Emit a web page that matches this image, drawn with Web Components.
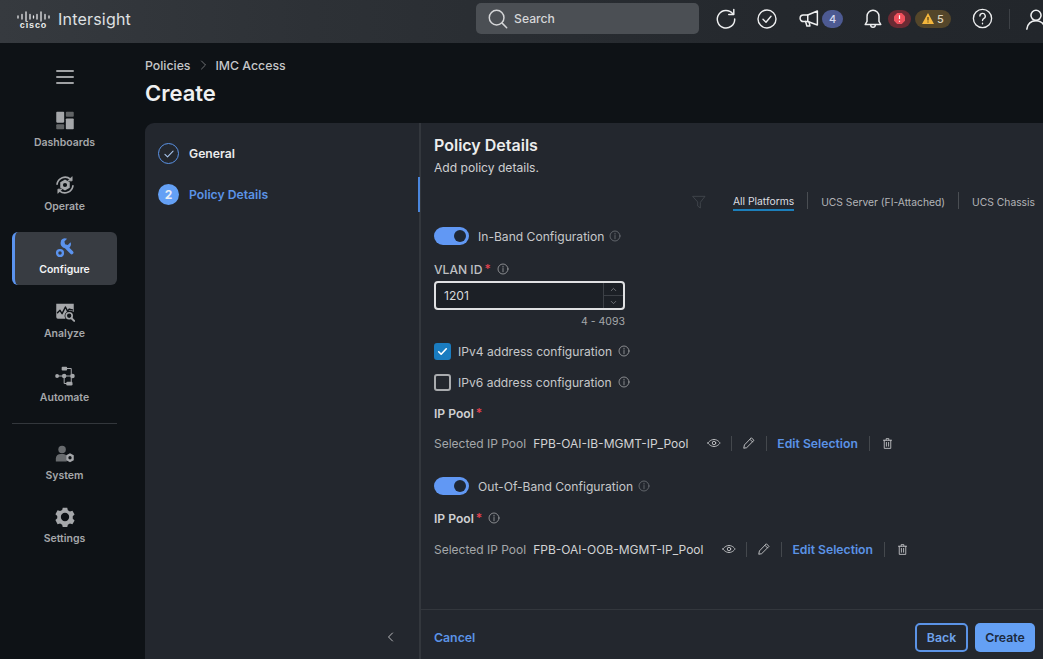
<!DOCTYPE html>
<html lang="en">
<head>
<meta charset="utf-8">
<title>Intersight - Create IMC Access policy</title>
<style>
    html, body {
        margin: 0;
        height: 100%;
        overflow: hidden;
        background: #0e1216;
        font-family: Inter, "Liberation Sans", sans-serif;
        color: #e6e7e9;
    }
</style>
</head>
<body>
<app-shell>
    <top-bar slot="top"></top-bar>
    <side-nav slot="nav">
        <nav-item icon="dashboards">Dashboards</nav-item>
        <nav-item icon="operate">Operate</nav-item>
        <nav-item icon="configure" active>Configure</nav-item>
        <nav-item icon="analyze">Analyze</nav-item>
        <nav-item icon="automate">Automate</nav-item>
        <nav-rule></nav-rule>
        <nav-item icon="system">System</nav-item>
        <nav-item icon="settings">Settings</nav-item>
    </side-nav>
    <page-head>
        <span slot="crumb">Policies</span>
        <span slot="current">IMC Access</span>
        Create
    </page-head>
    <wizard-card>
        <wizard-step slot="steps" state="done">General</wizard-step>
        <wizard-step slot="steps" state="current" number="2">Policy Details</wizard-step>

        <pane-title title="Policy Details" sub="Add policy details."></pane-title>
        <platform-tabs></platform-tabs>

        <toggle-row style="margin-top:16px">In-Band Configuration</toggle-row>
        <field-label info style="margin-top:16px">VLAN ID</field-label>
        <number-field value="1201" hint="4 - 4093"></number-field>
        <check-row checked style="margin-top:13px">IPv4 address configuration</check-row>
        <check-row style="margin-top:13px">IPv6 address configuration</check-row>
        <field-label bold style="margin-top:14px">IP Pool</field-label>
        <pool-row value="FPB-OAI-IB-MGMT-IP_Pool" style="margin-top:13px"></pool-row>

        <toggle-row style="margin-top:25px">Out-Of-Band Configuration</toggle-row>
        <field-label bold info style="margin-top:15px">IP Pool</field-label>
        <pool-row value="FPB-OAI-OOB-MGMT-IP_Pool" style="margin-top:14px"></pool-row>

        <wizard-footer slot="footer"></wizard-footer>
    </wizard-card>
</app-shell>

<script>
const ICONS = {
    search: `<circle cx="10.5" cy="10.5" r="8"/><path d="M16.500 16.500l5 5"/>`,
    refresh: `<path d="M19.500 6.500A9.500 9.500 0 1 0 21.500 12"/><path d="M20.500 1.500v5.500h-5.500"/>`,
    checkCircle: `<circle cx="12" cy="12" r="9"/><path d="M8 12.200l3 3 5-6"/>`,
    megaphone: `<path d="M21 3.500v16L10 15.500H5a3 3 0 0 1 0-7.500h5z"/><path d="M10 8v7.500M7.500 15.500l1.500 5h3.500l-1-4.300"/>`,
    bell: `<path d="M12 2.500a6.500 6.500 0 0 0-6.500 6.500v5.500L3.500 18h17l-2-3.500V9A6.500 6.500 0 0 0 12 2.500z"/><path d="M9.500 18.500a2.500 2.500 0 0 0 5 0"/>`,
    help: `<circle cx="12" cy="12" r="9.500"/><path d="M9.300 9.500a2.800 2.800 0 1 1 4.200 2.400c-1 .6-1.500 1.100-1.500 2.300"/><path d="M12 17v.5"/>`,
    user: `<circle cx="12" cy="8" r="5.500"/><path d="M2 23c1-6 5-9 10-9s9 3 10 9"/>`,
    menu: `<path d="M3 5.500h18M3 12h18M3 18.500h18"/>`,
    filter: `<path d="M3 3.500h18l-7 9V21l-4-3v-5.500z"/>`,
    eye: `<path d="M1.500 12S5.500 6 12 6s10.500 6 10.500 6-4 6-10.500 6S1.500 12 1.500 12z"/><circle cx="12" cy="12" r="3"/>`,
    pencil: `<path d="M16.500 3.500l4 4L8 20l-5 1 1-5z"/><path d="M14 6l4 4"/>`,
    trash: `<path d="M4.500 6h15M9.500 6V3h5v3M6 6v15h12V6M10 10v7M14 10v7"/>`,
    chevronLeft: `<path d="M15 4l-8 8 8 8"/>`,
    chevronRight: `<path d="M9 4l8 8-8 8"/>`,
    chevronUp: `<path d="M6 15l6-6 6 6"/>`,
    chevronDown: `<path d="M6 9l6 6 6-6"/>`,
    tick: `<path d="M5 12.500l4.500 4.500L19 7"/>`,
    info: `<circle cx="12" cy="12" r="10"/><path d="M12 11v6.500"/><path d="M12 6.500v1.800"/>`,
    dashboards: `<g fill="currentColor" stroke="none"><rect x="1.500" y="1" width="9.500" height="13" rx="1"/><rect x="13" y="1" width="9.500" height="6" rx="1" opacity=".55"/><rect x="1.500" y="16" width="9.500" height="6" rx="1" opacity=".55"/><rect x="13" y="9" width="9.500" height="13" rx="1"/></g>`,
    operate: `<path d="M2.500 11A9.700 9.700 0 0 1 18.500 5M21.500 13A9.700 9.700 0 0 1 5.500 19" stroke-width="2"/><path fill="currentColor" stroke="currentColor" stroke-width="1" d="M20.500 2.500v4.500H16zM3.500 21.500V17H8z"/><path fill="currentColor" stroke="none" fill-rule="evenodd" d="M12 5.500l5.700 3.200v6.600L12 18.500l-5.700-3.200V8.700zM12 9.500a2.500 2.500 0 1 0 0 5 2.500 2.500 0 0 0 0-5z"/>`,
    configure: `<path fill="currentColor" stroke="none" d="M8.500 2.500A6 6 0 0 1 15.500 1l-3.200 3.200.8 3.300 3.300.8L19.600 5a6 6 0 0 1-1.300 6.700l4.200 4.300a2 2 0 0 1-3 3l-6.600-6.700a6 6 0 0 1-5-7.500z" transform="translate(-1 0)"/><circle cx="6" cy="18" r="3.500" stroke-width="2.800"/>`,
    analyze: `<path fill="currentColor" stroke="none" d="M1.500 2h21v10a6.500 6.500 0 0 0-10 8H3.500a2 2 0 0 1-2-2z"/><path d="M3 13l3-3 2.500 4 4-8 2.500 5 2-2.500 4 1" stroke="#0e1216" stroke-width="1.700"/><circle cx="17" cy="16.500" r="3.600" stroke-width="2"/><path d="M19.800 19.500l3.200 3.200" stroke-width="2.400"/>`,
    automate: `<g fill="currentColor" stroke="none"><circle cx="2.500" cy="12" r="2.300"/><circle cx="11" cy="12" r="2.700"/><rect x="8" y="1" width="6.500" height="4.500" rx="1"/><circle cx="21" cy="12" r="2.700"/><rect x="13.500" y="19" width="7.500" height="4.500" rx="1.500"/></g><path d="M2 12h19M11 3h8.500v17M11 12v9h4" stroke-width="1.200"/>`,
    system: `<g fill="currentColor" stroke="none"><circle cx="8.500" cy="6.500" r="4.500" opacity=".6"/><path d="M1 21v-4a6 6 0 0 1 6-5h3a6 6 0 0 1 4 2v7z" opacity=".6"/><path fill-rule="evenodd" d="M18 11l4.500 2.600v5.800L18 22l-4.500-2.600v-5.800zM18 14.500a2 2 0 1 0 0 4 2 2 0 0 0 0-4z"/></g>`,
    settings: `<path fill="currentColor" stroke="none" fill-rule="evenodd" d="M9.300 1h5.400l.7 3 2.500 1.400 3-.9 2.600 4.600-2.200 2.100v2.800l2.200 2.100-2.600 4.600-3-.9-2.500 1.400-.7 3H9.300l-.7-3-2.500-1.400-3 .9L.5 15.600l2.200-2.100v-2.800L.5 8.600l2.600-4.600 3 .9 2.500-1.400zM12 7a5 5 0 1 0 0 10 5 5 0 0 0 0-10z"/>`
};

function tpl(html) {
    const template = document.createElement("template");
    template.innerHTML = html;
    return template;
}

/**
 * Base for every element on the page: opens the shadow root and clones the
 * template of the subclass into it.
 */
class UiElement extends HTMLElement {
    constructor() {
        super();
        this.attachShadow({mode: "open"});
        this.shadowRoot.appendChild(this.constructor.template.content.cloneNode(true));
    }
    attr(name, fallback = "") {
        return this.hasAttribute(name) ? this.getAttribute(name) : fallback;
    }
}

class UiIcon extends HTMLElement {
    constructor() {
        super();
        this.attachShadow({mode: "open"});
    }
    connectedCallback() {
        const size = this.getAttribute("size") || 16;
        const stroke = this.getAttribute("stroke") || 1.8;
        this.shadowRoot.innerHTML = `
            <style>:host { display: inline-flex; flex: none; } svg { display: block; }</style>
            <svg width="${size}" height="${size}" viewBox="0 0 24 24" fill="none" stroke="currentColor"
                stroke-width="${stroke}" stroke-linecap="round" stroke-linejoin="round">${ICONS[this.getAttribute("name")]}</svg>`;
    }
}
customElements.define("ui-icon", UiIcon);

class AppShell extends UiElement {
    static template = tpl(`
        <style>
            :host { display: grid; grid-template: 43px 1fr / 129px 1fr; height: 659px; width: 1043px; overflow: hidden; }
            .top { grid-column: 1 / 3; }
            main { display: flex; flex-direction: column; padding-left: 16px; min-width: 0; min-height: 0; }
        </style>
        <div class="top"><slot name="top"></slot></div>
        <slot name="nav"></slot>
        <main><slot></slot></main>
    `);
}
customElements.define("app-shell", AppShell);

class TopBar extends UiElement {
    static template = tpl(`
        <style>
            :host { display: flex; align-items: center; height: 43px; box-sizing: border-box; padding: 0 0 6px 17px; color: #eeeff0;
                background: linear-gradient(90deg, #363a3f 0%, #2d3136 30%, #24282d 75%, #22262b 100%); overflow: hidden; }
            .logo { display: flex; flex-direction: column; align-items: center; width: 33px; margin-top: 2px; }
            .logo span { font: 700 9px/8px "Liberation Sans", sans-serif; letter-spacing: .9px; margin-top: -1px; color: #eceded; }
            .name { font-size: 16px; margin-left: 8px; color: #dfe0e2; letter-spacing: .2px; white-space: nowrap; }
            .search { display: flex; align-items: center; gap: 5px; width: 212px; height: 31px; flex: none; margin-left: 345px; padding-left: 11px;
                background: #4b4f54; border-radius: 5px; font-size: 12.200px; font-weight: 500; color: #d5d6d8; }
            .badge { display: inline-flex; align-items: center; justify-content: center; flex: none; gap: 3px; height: 18px; border-radius: 9px; font-size: 11px; font-weight: 500; }
            .bar { width: 1px; height: 20px; flex: none; background: #3d4146; margin-left: 15.500px; }
        </style>
        <div class="logo">
            <svg width="33" height="11" viewBox="0 0 33 11" stroke="#e6e7e9" stroke-width="1.300" stroke-linecap="round">
                <path d="M1 5v2M5 3.500v4.500M9 1v9M13 3.500v4.500M16.500 5v2M20 3.500v4.500M24 1v9M28 3.500v4.500M32 5v2"/>
            </svg>
            <span>cisco</span>
        </div>
        <div class="name">Intersight</div>
        <div class="search"><ui-icon name="search" size="22" stroke="1.600"></ui-icon>Search</div>
        <ui-icon name="refresh" size="22" stroke="1.600" style="margin-left:16px"></ui-icon>
        <ui-icon name="checkCircle" size="24" stroke="1.400" style="margin-left:18px"></ui-icon>
        <ui-icon name="megaphone" size="21" stroke="1.700" style="margin-left:19.500px"></ui-icon>
        <span class="badge" style="width:21px;margin-left:2.500px;background:#4d5a92;color:#d7dbef">4</span>
        <ui-icon name="bell" size="22" stroke="1.600" style="margin-left:19px"></ui-icon>
        <span class="badge" style="width:23px;margin-left:4px;background:#6b2a33">
            <svg width="11" height="11" viewBox="0 0 12 12"><path fill="#f0505c" d="M3.500 0h5L12 3.500v5L8.500 12h-5L0 8.500v-5z"/><path d="M6 2.500v4M6 8.500v1" stroke="#fff" stroke-width="1.300"/></svg>
        </span>
        <span class="badge" style="width:36px;margin-left:4px;background:#54462a;color:#ddd6c2">
            <svg width="12" height="11" viewBox="0 0 12 11"><path fill="#f4b63c" d="M6 0l6 11H0z"/><path d="M6 4v3.500M6 8.500v1" stroke="#3a2f15" stroke-width="1.100"/></svg>5
        </span>
        <ui-icon name="help" size="23" stroke="1.400" style="margin-left:19.500px"></ui-icon>
        <span class="bar"></span>
        <ui-icon name="user" size="22" stroke="1.700" style="margin-left:15px"></ui-icon>
    `);
}
customElements.define("top-bar", TopBar);

class SideNav extends UiElement {
    static template = tpl(`
        <style>
            :host { display: flex; flex-direction: column; padding: 0 12px; gap: 10.700px; color: #a5a7aa; }
            .menu { display: flex; justify-content: center; height: 16px; margin: 23px 0 12.300px; color: #d0d1d3; }
        </style>
        <div class="menu"><ui-icon name="menu" size="22" stroke="1.500"></ui-icon></div>
        <slot></slot>
    `);
}
customElements.define("side-nav", SideNav);

class NavItem extends UiElement {
    static template = tpl(`
        <style>
            :host { display: block; height: 53px; box-sizing: border-box; border-radius: 6px; }
            :host([active]) { background: #383c42; border-left: 3px solid #5b93ee; color: #f2f3f4; }
            :host([active]) .wrap { margin-left: -3px; }
            :host([active]) ui-icon { color: #5b93ee; }
            .wrap { display: flex; flex-direction: column; align-items: center; padding-top: 6px; }
            #i { display: flex; }
            .label { font-size: 10.500px; font-weight: 600; line-height: 14px; margin-top: 5px; }
        </style>
        <div class="wrap"><span id="i"></span><div class="label"><slot></slot></div></div>
    `);
    connectedCallback() {
        this.shadowRoot.getElementById("i").innerHTML =
            `<ui-icon name="${this.attr("icon")}" size="20" stroke="1.600"></ui-icon>`;
    }
}
customElements.define("nav-item", NavItem);

class NavRule extends UiElement {
    static template = tpl(`
        <style>:host { display: block; height: 1px; background: #33373c; margin: 0 0 2.500px; }</style>
    `);
}
customElements.define("nav-rule", NavRule);

class PageHead extends UiElement {
    static template = tpl(`
        <style>
            :host { display: block; height: 80px; flex: none; }
            .crumbs { display: flex; align-items: center; height: 16px; margin-top: 14px; font-size: 12.300px; font-weight: 500; color: #c5c6c8; }
            .crumbs ui-icon { margin: 0 6px 0 7px; color: #8d8f92; }
            h1 { margin: 6px 0 0; font-size: 22px; line-height: 28px; font-weight: 600; color: #eff0f1; }
        </style>
        <div class="crumbs"><slot name="crumb"></slot><ui-icon name="chevronRight" size="12" stroke="1.500"></ui-icon><slot name="current"></slot></div>
        <h1><slot></slot></h1>
    `);
}
customElements.define("page-head", PageHead);

class WizardCard extends UiElement {
    static template = tpl(`
        <style>
            :host { display: grid; grid-template-columns: 276px 1fr; flex: 1; min-height: 0; background: #23272e; border-radius: 9px 0 0 0; }
            .steps { display: flex; flex-direction: column; gap: 20px; padding-top: 20px; border-right: 2px solid #33373d; position: relative; }
            .mark { position: absolute; right: -1px; top: 54px; width: 2px; height: 35px; background: #4a86dd; }
            .collapse { position: absolute; left: 240px; bottom: 16px; color: #c9cacc; }
            .right { display: flex; flex-direction: column; min-width: 0; }
            .body { flex: 1; padding: 12px 0 0 13px; display: flex; flex-direction: column; align-items: flex-start; }
        </style>
        <div class="steps">
            <slot name="steps"></slot>
            <div class="mark"></div>
            <ui-icon class="collapse" name="chevronLeft" size="12" stroke="1.800"></ui-icon>
        </div>
        <div class="right">
            <div class="body"><slot></slot></div>
            <slot name="footer"></slot>
        </div>
    `);
}
customElements.define("wizard-card", WizardCard);

class WizardStep extends UiElement {
    static template = tpl(`
        <style>
            :host { display: flex; align-items: center; gap: 10px; height: 21px; padding-left: 13px; font-size: 12.200px; font-weight: 600; color: #eceded; }
            :host([state=current]) { color: #5b93e6; }
            .dot { display: flex; align-items: center; justify-content: center; width: 21px; height: 21px; box-sizing: border-box; border-radius: 50%; font-size: 12px; font-weight: 700; }
            .done { border: 1.500px solid #5b93e6; color: #a9c6ee; }
            .now { background: #64a0f5; color: #e9eef6; }
        </style>
        <div class="dot" id="d"></div><slot></slot>
    `);
    connectedCallback() {
        const dot = this.shadowRoot.getElementById("d");
        if(this.attr("state") === "done") {
            dot.classList.add("done");
            dot.innerHTML = `<ui-icon name="tick" size="14" stroke="1.800"></ui-icon>`;
        } else {
            dot.classList.add("now");
            dot.textContent = this.attr("number");
        }
    }
}
customElements.define("wizard-step", WizardStep);

class PaneTitle extends UiElement {
    static template = tpl(`
        <style>
            :host { display: block; }
            h2 { margin: 0; font-size: 16px; line-height: 20px; font-weight: 600; color: #eceded; }
            p { margin: 5px 0 0; font-size: 12.100px; line-height: 16px; color: #cfd0d2; }
        </style>
        <h2 id="t"></h2><p id="s"></p>
    `);
    connectedCallback() {
        this.shadowRoot.getElementById("t").textContent = this.attr("title");
        this.shadowRoot.getElementById("s").textContent = this.attr("sub");
    }
}
customElements.define("pane-title", PaneTitle);

class PlatformTabs extends UiElement {
    static template = tpl(`
        <style>
            :host { display: flex; align-items: stretch; height: 19px; margin-top: 16px; align-self: stretch; font-size: 10.300px; color: #b3b5b8; }
            .filter { margin: 0 26px 0 257px; color: #454a50; align-self: center; }
            .tab { display: flex; align-items: center; box-sizing: border-box; white-space: nowrap; }
            .on { color: #dcdde0; border-bottom: 2px solid #1c7fbb; }
            .sep { width: 1px; background: #4a4e53; margin: 0 13px; height: 17px; }
        </style>
        <ui-icon class="filter" name="filter" size="16" stroke="1.200"></ui-icon>
        <div class="tab on">All Platforms</div><div class="sep"></div>
        <div class="tab">UCS Server (FI-Attached)</div><div class="sep"></div>
        <div class="tab">UCS Chassis</div>
    `);
}
customElements.define("platform-tabs", PlatformTabs);

class InfoMark extends UiElement {
    static template = tpl(`
        <style>
            :host { display: inline-flex; color: #a9abae; }
            :host([dim]) { color: #74787d; }
        </style>
        <ui-icon name="info" size="12" stroke="1.500"></ui-icon>
    `);
}
customElements.define("info-mark", InfoMark);

class ToggleRow extends UiElement {
    static template = tpl(`
        <style>
            :host { display: flex; align-items: center; height: 18px; font-size: 12.100px; color: #c6c7ca; }
            .sw { width: 35px; height: 18px; border-radius: 9px; background: #6198f4; display: flex; align-items: center; justify-content: flex-end; padding-right: 3px; box-sizing: border-box; margin-right: 9px; }
            .knob { width: 12px; height: 12px; border-radius: 50%; background: #1e2735; }
            info-mark { margin-left: 5px; }
        </style>
        <div class="sw"><div class="knob"></div></div><slot></slot><info-mark dim></info-mark>
    `);
}
customElements.define("toggle-row", ToggleRow);

class FieldLabel extends UiElement {
    static template = tpl(`
        <style>
            :host { display: flex; align-items: center; height: 16px; font-size: 12.100px; font-weight: 500; color: #bfc0c3; }
            :host([bold]) { font-weight: 600; color: #cfd0d2; }
            .req { color: #e0424f; margin-left: 2px; align-self: flex-start; font-size: 12px; }
            info-mark { margin-left: 6px; display: none; }
            :host([info]) info-mark { display: inline-flex; }
        </style>
        <slot></slot><span class="req">*</span><info-mark></info-mark>
    `);
}
customElements.define("field-label", FieldLabel);

class NumberField extends UiElement {
    static template = tpl(`
        <style>
            :host { display: block; width: 191px; margin-top: 4px; }
            .box { display: flex; height: 29px; box-sizing: border-box; border: 2px solid #dfe0e2; border-radius: 4px; background: #1c2026; }
            .val { flex: 1; padding-left: 8px; font-size: 12.100px; line-height: 25px; color: #d8d9db; }
            .spin { width: 19px; border-left: 1px solid #3c4046; display: flex; flex-direction: column; color: #85888c; }
            .spin div { flex: 1; display: flex; align-items: center; justify-content: center; }
            .spin div + div { border-top: 1px solid #3c4046; }
            .hint { text-align: right; font-size: 10.500px; line-height: 14px; margin-top: 5px; color: #a5a7aa; }
        </style>
        <div class="box">
            <div class="val" id="v"></div>
            <div class="spin">
                <div><ui-icon name="chevronUp" size="9" stroke="2"></ui-icon></div>
                <div><ui-icon name="chevronDown" size="9" stroke="2"></ui-icon></div>
            </div>
        </div>
        <div class="hint" id="h"></div>
    `);
    connectedCallback() {
        this.shadowRoot.getElementById("v").textContent = this.attr("value");
        this.shadowRoot.getElementById("h").textContent = this.attr("hint");
    }
}
customElements.define("number-field", NumberField);

class CheckRow extends UiElement {
    static template = tpl(`
        <style>
            :host { display: flex; align-items: center; height: 18px; font-size: 12.100px; color: #c6c7ca; }
            .cb { width: 17px; height: 17px; box-sizing: border-box; margin-right: 7px; border-radius: 3px; border: 2px solid #a9abae; display: flex; align-items: center; justify-content: center; color: #fff; }
            :host([checked]) .cb { background: #1a7cc0; border-color: #1a7cc0; }
            .cb ui-icon { visibility: hidden; }
            :host([checked]) .cb ui-icon { visibility: visible; }
            info-mark { margin-left: 6px; }
        </style>
        <div class="cb"><ui-icon name="tick" size="13" stroke="3"></ui-icon></div><slot></slot><info-mark></info-mark>
    `);
}
customElements.define("check-row", CheckRow);

class PoolRow extends UiElement {
    static template = tpl(`
        <style>
            :host { display: flex; align-items: center; height: 18px; font-size: 12px; color: #a5a7aa; white-space: nowrap; }
            .val { margin-left: 7px; color: #d2d3d5; }
            .sep { width: 1px; height: 15px; background: #44484d; margin: 0 10px; }
            .act { color: #c5c6c8; }
            .eye { margin-left: 19px; }
            a { color: #5b93e6; font-weight: 600; font-size: 12.200px; }
        </style>
        <span>Selected IP Pool</span><span class="val" id="v"></span>
        <ui-icon class="act eye" name="eye" size="14" stroke="1.600"></ui-icon><span class="sep"></span>
        <ui-icon class="act" name="pencil" size="14" stroke="1.600"></ui-icon><span class="sep"></span>
        <a>Edit Selection</a><span class="sep" style="margin-left:11px;margin-right:11px"></span>
        <ui-icon class="act" name="trash" size="13" stroke="1.600"></ui-icon>
    `);
    connectedCallback() {
        this.shadowRoot.getElementById("v").textContent = this.attr("value");
    }
}
customElements.define("pool-row", PoolRow);

class WizardFooter extends UiElement {
    static template = tpl(`
        <style>
            :host { display: flex; align-items: center; height: 50px; box-sizing: border-box; flex: none; padding: 6px 8px 0 13px; border-top: 1px solid #33373d; font-size: 12.300px; font-weight: 600; }
            .cancel { color: #5b93e6; margin-right: auto; }
            .btn { display: flex; align-items: center; justify-content: center; height: 29px; box-sizing: border-box; border-radius: 5px; }
            .back { width: 53px; border: 2px solid #5b93e6; color: #6fa3ec; margin-right: 7px; }
            .create { width: 60px; background: #64a0f5; color: #1c2a3e; }
        </style>
        <span class="cancel">Cancel</span>
        <div class="btn back">Back</div>
        <div class="btn create">Create</div>
    `);
}
customElements.define("wizard-footer", WizardFooter);
</script>
</body>
</html>
